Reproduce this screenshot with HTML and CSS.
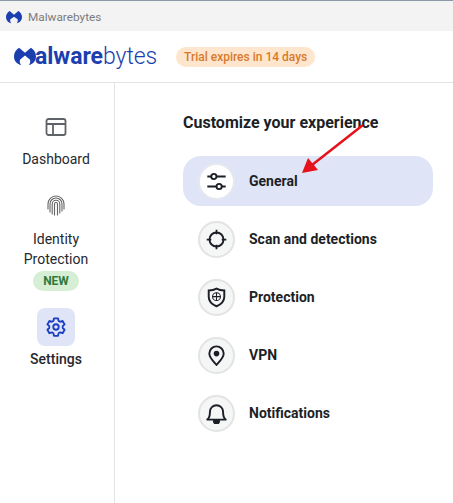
FILE: index.html
```html
<!DOCTYPE html>
<html lang="en">
<head>
<meta charset="utf-8">
<title>Malwarebytes</title>
<link rel="stylesheet" href="styles.css">
</head>
<body>
<div class="app">
  <div class="titlebar">
    <svg class="title-logo" viewBox="0 0 24 20"><path d="M5.500 1 12 6.500 18.500 1C21.500 3 24 6 24 10c0 5-3.500 8.500-8 9.500 1.500-1.500 2-3.500 1.500-6L12 9.500 6.500 13.500C6 16 6.500 18 8 19.500 3.500 18.500 0 15 0 10 0 6 2.500 3 5.500 1Z" fill="#1b3fae"/></svg>
    <span class="title-text">Malwarebytes</span>
  </div>
  <header class="brandbar">
    <div class="brand">
      <svg class="brand-mark" viewBox="0 0 24 20"><path d="M5.500 .5 12 6 18.500 .5C22 3 24 6 24 10c0 5-3.500 8.500-8 9.500 1.500-1.500 2-3.500 1.500-6L12 9 6.500 13.500C6 16 6.500 18 8 19.500 3.500 18.500 0 15 0 10 0 6 2 3 5.500 .5Z" fill="#1b3fae"/></svg>
      <span class="brand-name"><b>alware</b>bytes</span>
    </div>
    <span class="trial">Trial expires in 14 days</span>
  </header>
  <div class="body">
    <nav class="sidebar">
      <div class="nav-item nav-dash">
        <svg class="nav-icon" viewBox="0 0 24 24" fill="none" stroke="#5f6368" stroke-width="1.800"><rect x="2.500" y="4" width="19" height="16" rx="2"/><path d="M2.500 9H21.500M9 9V20"/></svg>
        <span>Dashboard</span>
      </div>
      <div class="nav-item nav-id">
        <svg class="nav-icon" viewBox="0 0 24 24" fill="none" stroke="#666" stroke-width="1.100" stroke-linecap="round"><path d="M4 15V10a8 8 0 0 1 16 0v5"/><path d="M6 18V10a6 6 0 0 1 12 0v7"/><path d="M8.200 20V10a3.800 3.800 0 0 1 7.600 0v9"/><path d="M10.500 21V10a1.500 1.500 0 0 1 3 0v11"/></svg>
        <span class="nav-label">Identity<br>Protection</span>
        <span class="new">NEW</span>
      </div>
      <div class="nav-item nav-set">
        <div class="set-tile">
          <svg class="set-icon" viewBox="0 0 24 24" fill="none" stroke="#1b3fc4" stroke-width="2" stroke-linejoin="round"><path d="M9.800 2.500h4.400l.6 2.800 1.700 1 2.700-.9 2.200 3.800-2.100 1.900v2l2.100 1.900-2.200 3.800-2.700-.9-1.700 1-.6 2.800H9.800l-.6-2.800-1.700-1-2.700.9-2.200-3.800 2.100-1.900v-2L2.600 9.200l2.200-3.800 2.700.9 1.700-1Z"/><circle cx="12" cy="12" r="3"/></svg>
        </div>
        <span>Settings</span>
      </div>
    </nav>
    <main class="content">
      <h1>Customize your experience</h1>
      <ul class="menu">
        <li class="row active">
          <span class="disc"><svg viewBox="0 0 24 24" fill="none" stroke="#1d1f26" stroke-width="2.200"><path d="M1.500 6.300H6M12 6.300H22.500M1.500 17.700H12M18 17.700H22.500"/><circle cx="9" cy="6.300" r="3"/><circle cx="15" cy="17.700" r="3"/></svg></span>
          <span>General</span>
        </li>
        <li class="row">
          <span class="disc"><svg viewBox="0 0 24 24" fill="none" stroke="#1d1f26" stroke-width="2.200"><circle cx="12" cy="12" r="8"/><path d="M12 .8V6M12 18V23.200M.8 12H6M18 12H23.200" stroke-width="2"/></svg></span>
          <span>Scan and detections</span>
        </li>
        <li class="row">
          <span class="disc"><svg viewBox="0 0 24 24" fill="none" stroke="#1d1f26" stroke-width="2.200"><path d="M12 1.800C9 3.600 6 4 3.100 4V11c0 5 3.700 8.700 8.900 11 5.200-2.300 8.900-6 8.900-11V4C18 4 15 3.600 12 1.800Z"/><circle cx="12" cy="11" r="4.500" stroke-width="1.200"/><path d="M7.500 11H16.500M12 6.500V15.500" stroke-width="1.200"/></svg></span>
          <span>Protection</span>
        </li>
        <li class="row">
          <span class="disc"><svg viewBox="0 0 24 24" fill="none" stroke="#1d1f26" stroke-width="2.200"><path d="M12 22.800C7.500 18 3.800 14.500 3.800 9.800a8.200 8.200 0 0 1 16.400 0c0 4.700-3.700 8.200-8.200 13Z"/><circle cx="12" cy="9.800" r="3.200" fill="#1d1f26" stroke="none"/></svg></span>
          <span>VPN</span>
        </li>
        <li class="row">
          <span class="disc"><svg viewBox="0 0 24 24" fill="none" stroke="#1d1f26" stroke-width="2.200" stroke-linejoin="round"><path d="M1.500 19H22.500C19.500 17 19.500 14 19.500 10a7.500 7.500 0 0 0-15 0C4.500 14 4.500 17 1.500 19Z"/><path d="M9 20.500a3 3 0 0 0 6 0Z" fill="#1d1f26"/></svg></span>
          <span>Notifications</span>
        </li>
      </ul>
    </main>
  </div>
  <svg class="arrow" viewBox="0 0 453 503"><path d="M363 125 312 165" stroke="#e5121c" stroke-width="2.500" fill="none"/><path d="M302 173 308 158 318 170Z" fill="#e5121c"/></svg>
</div>
</body>
</html>
```

FILE: styles.css
```css
* { box-sizing: border-box; }
html, body { margin: 0; padding: 0; }
body { font-family: Roboto, "Liberation Sans", sans-serif; background: #fff; color: #1d1f26; }
.app { position: relative; width: 453px; height: 503px; overflow: hidden; display: flex; flex-direction: column; }
.titlebar { height: 31px; flex: none; display: flex; align-items: center; gap: 6px; padding: 1px 0 0 6px; background: #f3f3f3; border-top: 1px solid #8b98a5; }
.title-logo { width: 16px; height: 14px; }
.title-text { font-size: 11.800px; color: #7b7b7b; }
.brandbar { height: 52px; flex: none; display: flex; align-items: center; padding: 0 0 0 14px; border-bottom: 1px solid #e3e3e3; }
.brand { display: flex; align-items: center; color: #1b3fae; width: 162px; }
.brand-mark { width: 22px; height: 19px; flex: none; margin-right: -1px; }
.brand-name { font-size: 23px; font-weight: 300; letter-spacing: -.05px; line-height: 26px; }
.brand-name b { font-weight: 700; }
.trial { height: 20px; padding: 0 8px; border-radius: 10px; background: #fde6cd; color: #d97a2b; font-size: 12px; font-weight: 500; line-height: 20px; white-space: nowrap; }
.body { flex: 1; display: flex; min-height: 0; }
.sidebar { width: 115px; flex: none; padding-right: 2px; border-right: 1px solid #e3e3e3; display: flex; flex-direction: column; align-items: center; font-size: 14px; line-height: 20px; color: #26282e; }
.nav-item { display: flex; flex-direction: column; align-items: center; text-align: center; }
.nav-dash { margin-top: 32px; }
.nav-icon { width: 24px; height: 24px; }
.nav-dash span { margin-top: 10px; }
.nav-id { margin-top: 25px; }
.nav-label { margin-top: 11px; }
.new { width: 46px; height: 20px; margin-top: 2px; border-radius: 10px; background: #d6eed4; color: #2f7a3a; font-size: 12px; font-weight: 700; line-height: 20px; }
.nav-set { margin-top: 17px; font-weight: 500; }
.set-tile { width: 38px; height: 38px; border-radius: 8px; background: #dfe5f7; display: flex; align-items: center; justify-content: center; margin-bottom: 3px; }
.set-icon { width: 22px; height: 22px; }
.content { flex: 1; padding: 30px 0 0 68px; }
h1 { margin: 0; font-size: 16px; font-weight: 700; line-height: 20px; color: #1d1f26; }
.menu { list-style: none; margin: 23px 0 0; padding: 0; width: 250px; display: flex; flex-direction: column; gap: 8px; }
.row { height: 50px; display: flex; align-items: center; gap: 14px; padding-left: 15px; font-size: 14px; font-weight: 700; border-radius: 18px; }
.row.active { background: #dfe5f7; }
.disc { width: 37px; height: 37px; border-radius: 50%; background: #f5f6f6; border: 2px solid #e3e3e3; display: flex; align-items: center; justify-content: center; flex: none; }
.active .disc { background: #fff; border-color: #e6e8f0; }
.disc svg { width: 21px; height: 21px; }
.arrow { position: absolute; left: 0; top: 0; width: 453px; height: 503px; pointer-events: none; }
```
